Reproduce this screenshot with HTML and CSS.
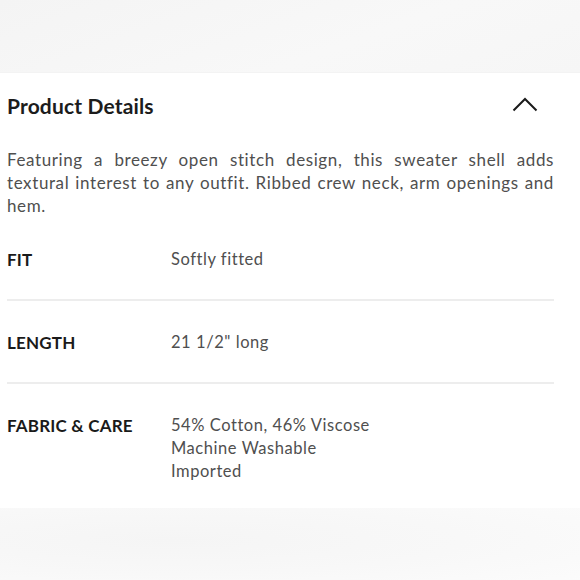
FILE: index.html
```html
<!DOCTYPE html>
<html>
<head>
<meta charset="utf-8">
<link rel="stylesheet" href="styles.css">
</head>
<body>
<div class="top"></div>
<section class="panel">
  <div class="header">
    <h2 class="title">Product Details</h2>
    <svg class="chevron" width="26" height="16" viewBox="0 0 26 16"><path d="M1.5 14.5 L13 3 L24.5 14.5" fill="none" stroke="#1a1a1a" stroke-width="2"/></svg>
  </div>
  <p class="desc">Featuring a breezy open stitch design, this sweater shell adds textural interest to any outfit. Ribbed crew neck, arm openings and hem.</p>
  <div class="row">
    <div class="label">FIT</div>
    <div class="value">Softly fitted</div>
  </div>
  <div class="row">
    <div class="label">LENGTH</div>
    <div class="value">21 1/2" long</div>
  </div>
  <div class="row last">
    <div class="label">FABRIC &amp; CARE</div>
    <div class="value">54% Cotton, 46% Viscose<br>Machine Washable<br>Imported</div>
  </div>
</section>
<div class="bottom"></div>
</body>
</html>
```
FILE: styles.css
```css
html, body {
  margin: 0;
  padding: 0;
  background: #ffffff;
  font-family: "Lato", "Open Sans", sans-serif;
}
.top {
  height: 72px;
  background: linear-gradient(160deg, #f4f4f4 0%, #f8f8f8 60%, #f6f6f6 100%);
  border-bottom: 1px solid #f3f3f3;
}
.panel {
  padding: 0 26px 0 7px;
  background: #fff;
}
.header {
  display: flex;
  justify-content: space-between;
  align-items: center;
  padding-top: 21px;
}
.title {
  margin: 0;
  font-size: 21px;
  line-height: 24px;
  font-weight: 700;
  color: #1c1c1c;
  letter-spacing: 0.15px;
}
.chevron {
  margin-right: 16px;
  margin-top: -4px;
}
.desc {
  margin: 30px 0 0;
  font-size: 17px;
  line-height: 23px;
  color: #4f4f4f;
  text-align: justify;
  letter-spacing: 0.6px;
}
.row {
  display: grid;
  grid-template-columns: 164px 1fr;
  padding: 30px 0 28px;
  border-bottom: 2px solid #ededed;
}
.desc + .row {
  padding-top: 31px;
}
.row.last {
  border-bottom: none;
  padding-bottom: 25px;
}
.label {
  font-size: 17px;
  line-height: 23px;
  font-weight: 700;
  color: #1a1a1a;
  letter-spacing: 0.2px;
}
.value {
  font-size: 16.5px;
  line-height: 23px;
  color: #4f4f4f;
  letter-spacing: 0.55px;
}
.bottom {
  height: 80px;
  background: radial-gradient(ellipse at 30% 40%, #f5f5f5 0%, #f8f8f8 50%, #fcfcfc 100%);
}
```
